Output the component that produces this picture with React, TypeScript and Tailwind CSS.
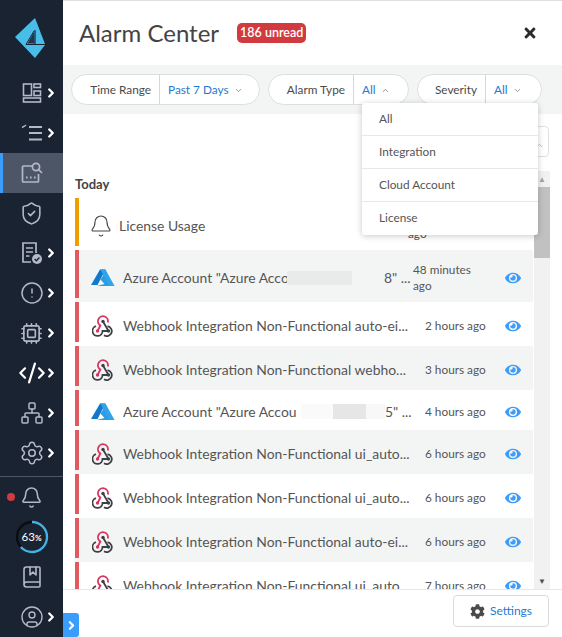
import React from "react";
import { ChevronRight, ChevronDown, ChevronUp, ShieldCheck, CircleAlert, Cpu, CodeXml, Network, Settings, Bell, BookMarked, CircleUser } from "lucide-react";
import { FaEye, FaCog, FaTimes } from "react-icons/fa";

const ic = "#b3b9c5";

function DashIcon() {
  return (
    <svg width="20" height="20" viewBox="0 0 20 20" fill="none" stroke={ic} strokeWidth="1.6" className="shrink-0">
      <rect x="1.5" y="1" width="8" height="11.5" />
      <rect x="1.5" y="15" width="17" height="4" />
      <rect x="12" y="1" width="6.5" height="3.5" />
      <rect x="12" y="8" width="6.5" height="4.5" />
    </svg>
  );
}
function ListIcon() {
  return (
    <svg width="22" height="20" viewBox="0 0 22 20" fill="none" stroke={ic} strokeWidth="1.8" className="shrink-0">
      <path d="M8 4h13M8 10h13M8 16.5h13" />
      <path d="M1 4.5L3 3.5L5 2" strokeWidth="1.4" />
    </svg>
  );
}
function SearchCard() {
  return (
    <svg width="22" height="22" viewBox="0 0 22 22" fill="none" stroke={ic} strokeWidth="1.7" className="shrink-0">
      <path d="M11 4H2.5a1 1 0 0 0-1 1v14a1 1 0 0 0 1 1h14a1 1 0 0 0 1-1v-7" />
      <circle cx="15" cy="5" r="3.6" />
      <path d="M17.8 7.8L21 11" />
      <path d="M5 15.5h1.6M9 15.5h1.6M13 15.5h1.6" strokeWidth="1.8" />
    </svg>
  );
}
function DocCheck() {
  return (
    <svg width="22" height="24" viewBox="0 0 22 24" fill="none" stroke={ic} strokeWidth="1.7" className="shrink-0">
      <path d="M10 21H2V2h13v10" />
      <path d="M5 7h7M5 11h7M5 15h3.5" />
      <circle cx="16" cy="18" r="5" fill={ic} stroke="none" />
      <path d="M13.6 18l1.8 1.8 3-3.3" stroke="#1a2332" strokeWidth="1.4" />
    </svg>
  );
}

function Logo() {
  return (
    <svg width="32" height="42" viewBox="0 0 32 42" className="shrink-0">
      <polygon points="20,0 0,19 20,40" fill="#49bce8" />
      <polygon points="20,0 30,26 20,26" fill="#49bce8" />
      <polygon points="20,27 30,27 20,40" fill="#49bce8" />
      <path d="M19 13L11 26.5H30" fill="none" stroke="#1a2332" strokeWidth="1" />
      <polygon points="19,14 12.5,25.5 19.5,25.5" fill="#24344a" />
      <path d="M20 12V27" stroke="#1a2332" strokeWidth="1.2" />
    </svg>
  );
}

function NavItem({ icon, chev = true, active = false }: { icon: React.ReactNode; chev?: boolean; active?: boolean }) {
  return (
    <div className={`flex h-10 items-center ${active ? "bg-[#4c5667] border-l-[3px] border-[#3a9dfb] pl-[18px]" : "pl-[21px]"}`}>
      <div className="flex w-[21px] items-center justify-center">{icon}</div>
      {chev && <ChevronRight size={14} strokeWidth={4} className="ml-[2px] shrink-0 text-white" />}
    </div>
  );
}

function Ring() {
  const r = 15;
  const c = 2 * Math.PI * r;
  return (
    <div className="relative flex h-10 items-center justify-center">
      <svg width="34" height="34" viewBox="0 0 34 34">
        <circle cx="17" cy="17" r={r} fill="none" stroke="#0a0d12" strokeWidth="2.4" />
        <circle cx="17" cy="17" r={r} fill="none" stroke="#41b2e2" strokeWidth="2.4" strokeDasharray={`${c * 0.63} ${c}`} transform="rotate(-90 17 17)" />
      </svg>
      <span className="absolute text-[11.5px] leading-none text-white">63<span className="text-[8px] font-bold">%</span></span>
    </div>
  );
}

function Sidebar() {
  return (
    <aside className="flex h-full w-[63px] shrink-0 flex-col bg-[#1a2332]">
      <div className="flex h-[73px] items-center pl-[15px] pt-[4px]"><Logo /></div>
      <NavItem icon={<DashIcon />} />
      <NavItem icon={<ListIcon />} />
      <NavItem active chev={false} icon={<SearchCard />} />
      <NavItem chev={false} icon={<ShieldCheck size={25} color={ic} strokeWidth={1.5} className="shrink-0" />} />
      <NavItem icon={<DocCheck />} />
      <NavItem icon={<CircleAlert size={24} color={ic} strokeWidth={1.5} className="shrink-0" />} />
      <NavItem icon={<Cpu size={23} color={ic} strokeWidth={1.7} className="shrink-0" />} />
      <NavItem icon={<CodeXml size={28} color="#ffffff" strokeWidth={1.9} className="shrink-0" />} />
      <NavItem icon={<Network size={24} color={ic} strokeWidth={1.5} className="shrink-0" />} />
      <NavItem icon={<Settings size={26} color={ic} strokeWidth={1.4} className="shrink-0" />} />
      <div className="mt-[3px] border-t border-[#4c5667]" />
      <div className="relative flex h-10 items-center justify-center">
        <span className="absolute left-[7px] h-2 w-2 rounded-full bg-[#d13b3f]" />
        <Bell size={23} color={ic} strokeWidth={1.6} />
      </div>
      <Ring />
      <div className="flex h-10 items-center justify-center"><BookMarked size={24} color={ic} strokeWidth={1.6} /></div>
      <NavItem icon={<CircleUser size={24} color={ic} strokeWidth={1.4} className="shrink-0" />} />
    </aside>
  );
}

function Pill({ label, value, up = false, w, lw }: { label: string; value: string; up?: boolean; w: string; lw: string }) {
  return (
    <div className={`flex h-[31px] items-center rounded-full border border-[#dcdfe0] bg-white text-[11.8px] ${w}`}>
      <div className={`flex h-full items-center justify-end border-r border-[#d5d8d9] pr-[8px] pt-[1px] text-[#4a4a4a] ${lw}`}>{label}</div>
      <div className="flex items-center gap-[5px] pl-[8px] pt-[1px] text-[#1f7ad1]">
        {value}
        {up ? <ChevronUp size={9} strokeWidth={2} className="text-[#777]" /> : <ChevronDown size={9} strokeWidth={2} className="text-[#777]" />}
      </div>
    </div>
  );
}

function Webhook() {
  return (
    <svg width="22" height="22" viewBox="0 0 22 22" fill="none" strokeWidth="1.8" className="shrink-0">
      <path d="M5.5 16L8.4 10.5A5 5 0 1 1 15.8 7.5" stroke="#d8345f" />
      <path d="M11 6.5L16.5 16M15.5 11.2A5 5 0 1 1 12 20.3" stroke="#3f3f46" />
      <path d="M16.5 16H10.5A5 5 0 1 1 4 11.2" stroke="#3f3f46" />
      <circle cx="11" cy="6.5" r="1.7" fill="#3f3f46" />
      <circle cx="5.5" cy="16" r="1.7" fill="#d8345f" />
      <circle cx="16.5" cy="16" r="1.7" fill="#3f3f46" />
    </svg>
  );
}

function Azure() {
  return (
    <svg width="24" height="18" viewBox="0 0 24 18" className="shrink-0">
      <polygon points="9,0.5 14.5,0.5 6.5,16 0,16" fill="#1079cb" />
      <polygon points="13,5 23.5,17 6,17 13.5,15 9.5,10.5" fill="#2b9be3" />
      <polygon points="9.5,0.5 14.5,0.5 23.5,17 18,17" fill="#2fa4ea" />
    </svg>
  );
}

type Size = "tall" | "short" | "normal";
type Row = { bar: string; icon: React.ReactNode; title: React.ReactNode; time: string; size?: Size; wrap?: boolean; gray?: boolean; bellRow?: boolean };

const W = <Webhook />;
const rows: Row[] = [
  { bar: "bg-[#f09d00]", icon: <Bell size={24} color="#444" strokeWidth={1.1} />, title: "License Usage", time: "37 minutes ago", size: "tall", wrap: true, bellRow: true },
  {
    bar: "bg-[#e05a5f]", icon: <Azure />, gray: true, size: "tall", wrap: true, time: "48 minutes ago",
    title: (
      <span className="flex items-center">
        <span className="w-[164px] shrink-0 overflow-hidden whitespace-nowrap">Azure Account "Azure Acco</span>
        <span className="h-[14px] w-[65px] shrink-0 bg-[#e9ebeb]" />
        <span className="w-[32px] shrink-0" />
        <span className="whitespace-nowrap">8" ...</span>
      </span>
    ),
  },
  { bar: "bg-[#e05a5f]", icon: W, title: "Webhook Integration Non-Functional auto-ei...", time: "2 hours ago" },
  { bar: "bg-[#e05a5f]", icon: W, gray: true, title: "Webhook Integration Non-Functional webho...", time: "3 hours ago" },
  {
    bar: "bg-[#e05a5f]", icon: <Azure />, time: "4 hours ago", size: "short",
    title: (
      <span className="flex items-center">
        <span className="w-[178px] shrink-0 overflow-hidden whitespace-nowrap">Azure Account "Azure Accou</span>
        <span className="h-[15px] w-[32px] shrink-0 bg-[#fafafa]" />
        <span className="h-[15px] w-[33px] shrink-0 bg-[#e6e6e6]" />
        <span className="h-[15px] w-[19px] shrink-0 bg-[#f8f8f8]" />
        <span className="whitespace-nowrap">5" ...</span>
      </span>
    ),
  },
  { bar: "bg-[#e05a5f]", icon: W, gray: true, title: "Webhook Integration Non-Functional ui_auto...", time: "6 hours ago" },
  { bar: "bg-[#e05a5f]", icon: W, title: "Webhook Integration Non-Functional ui_auto...", time: "6 hours ago" },
  { bar: "bg-[#e05a5f]", icon: W, gray: true, title: "Webhook Integration Non-Functional auto-ei...", time: "6 hours ago" },
  { bar: "bg-[#e05a5f]", icon: W, title: "Webhook Integration Non-Functional ui_auto...", time: "7 hours ago" },
];

const rowH: Record<Size, string> = { tall: "h-[52px]", short: "h-[40px]", normal: "h-[44px]" };
const barH: Record<Size, string> = { tall: "h-[48px]", short: "h-[36px]", normal: "h-[40px]" };

function AlarmRow({ r }: { r: Row }) {
  const size = r.size ?? "normal";
  const h = rowH[size];
  const cell = `${h} pt-[4px]`;
  return (
    <div className={`flex shrink-0 items-start ${h} ${r.gray ? "bg-[#f3f5f5]" : "bg-white"}`}>
      <div className={`w-[4px] shrink-0 ${r.bar} ${barH[size]}`} />
      <div className={`flex w-[44px] shrink-0 items-center justify-center ${cell} ${r.bellRow ? "" : "pl-[3px]"}`}>{r.icon}</div>
      <div className={`flex w-[290px] shrink-0 items-center truncate text-[13.9px] text-[#555] ${r.bellRow ? "-ml-[4px]" : ""} ${cell}`}>{r.title}</div>
      <div className={`flex w-[84px] shrink-0 items-center text-[11.8px] leading-[16px] text-[#555] ${r.bellRow ? "-ml-[1px]" : ""} ${r.wrap ? "" : "pl-[12px]"} ${cell}`}>
        <span className={r.wrap ? "w-[70px]" : "whitespace-nowrap"}>{r.time}</span>
      </div>
      <div className={`flex w-[32px] shrink-0 items-center justify-center ${cell}`}>
        {!r.bellRow && <FaEye size={16} color="#3f9dfa" />}
      </div>
    </div>
  );
}

function Dropdown() {
  const items = ["All", "Integration", "Cloud Account", "License"];
  return (
    <div className="absolute left-[299px] top-[103px] w-[176px] rounded-[3px] bg-white shadow-[0_1px_6px_rgba(0,0,0,0.22)]">
      {items.map((t, i) => (
        <div key={t} className={`flex h-[33px] items-center pl-[17px] text-[11.8px] text-[#555] ${i < 3 ? "border-b border-[#e6e8e8]" : "pb-[1px]"}`}>{t}</div>
      ))}
    </div>
  );
}

export default function App() {
  return (
    <div className="flex h-[637px] w-[562px] overflow-hidden bg-white font-['Lato','Liberation_Sans',sans-serif]">
      <Sidebar />
      <main className="relative flex h-full min-w-0 flex-1 flex-col">
        <header className="flex h-[65px] shrink-0 items-center border-t border-[#dfe1e1] pl-[16px] pr-[24px]">
          <h1 className="text-[24px] font-normal leading-none text-[#444]">Alarm Center</h1>
          <span className="ml-[18px] flex h-[20px] items-center rounded-[5px] bg-[#d13b3f] px-[3px] text-[12.5px] font-semibold text-white">186 unread</span>
          <FaTimes size={16} className="ml-auto text-[#2b2b2b]" />
        </header>
        <div className="flex h-[49px] shrink-0 items-center gap-[8px] bg-[#f3f5f5] pl-[8px]">
          <Pill label="Time Range" value="Past 7 Days" w="w-[189px]" lw="w-[88px]" />
          <Pill label="Alarm Type" value="All" up w="w-[141px]" lw="w-[85px]" />
          <Pill label="Severity" value="All" w="w-[125px]" lw="w-[68px]" />
        </div>
        <div className="flex h-[57px] shrink-0 items-start justify-end pr-[13px] pt-[12px]">
          <div className="flex h-[31px] w-[150px] items-end justify-end rounded-[4px] border border-[#dfe1e1] bg-white pb-[6px] pr-[4px]">
            <ChevronUp size={9} className="text-[#aaa]" />
          </div>
        </div>
        <div className="flex min-h-0 flex-1 pl-[12px]">
          <div className="flex min-w-0 w-[458px] flex-col overflow-hidden">
            <div className="flex h-[27px] shrink-0 items-center text-[13px] font-bold text-[#444]">Today</div>
            {rows.map((r, i) => <AlarmRow key={i} r={r} />)}
          </div>
          <div className="ml-[1px] flex w-[16px] flex-col items-center bg-[#f1f1f1]">
            <div className="flex h-[16px] items-center justify-center"><span className="text-[8px] leading-none text-[#a3a3a3]">▲</span></div>
            <div className="h-[71px] w-full bg-[#c1c1c1]" />
            <div className="mt-auto flex h-[16px] items-center justify-center"><span className="text-[8px] leading-none text-[#505050]">▼</span></div>
          </div>
        </div>
        <footer className="flex h-[48px] shrink-0 items-start justify-end border-t border-[#e6e8e8] pr-[13px] pt-[5px]">
          <button className="flex h-[32px] w-[96px] items-center justify-center gap-[5px] rounded-[4px] border border-[#d9dbdb] bg-white text-[12px] text-[#1f7ad1]">
            <FaCog size={15} className="text-[#4a4a4a]" />
            Settings
          </button>
        </footer>
        <Dropdown />
        <div className="absolute bottom-0 left-0 flex h-[24px] w-[16px] items-center justify-center rounded-r-[3px] bg-[#3a9dfb]">
          <ChevronRight size={13} strokeWidth={4} className="text-white" />
        </div>
      </main>
    </div>
  );
}
